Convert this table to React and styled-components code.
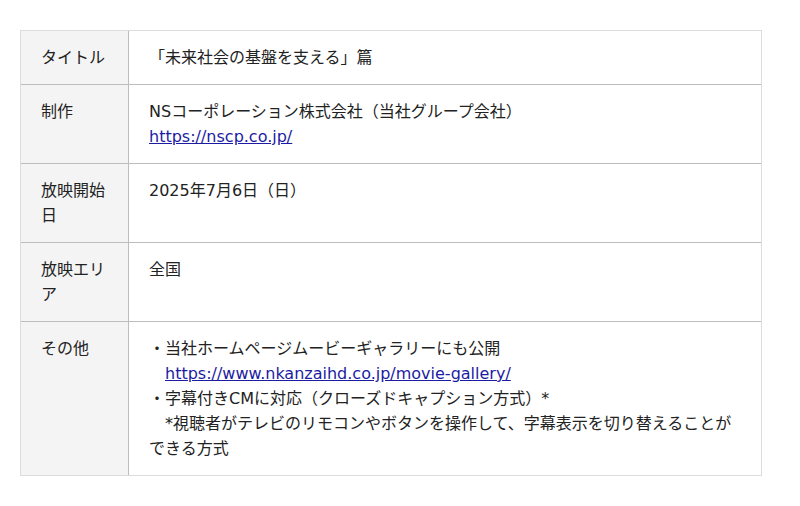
import React from 'react';
import styled, {createGlobalStyle} from 'styled-components';

const GlobalStyle = createGlobalStyle`
	body {
		margin: 0;
		background: #fff;
		font-family: 'DejaVu Sans', 'Noto Sans CJK JP', sans-serif;
		color: #222;
	}
`;

const Page = styled.div`
	padding: 30px 20px;
`;

const Table = styled.div`
	width: 742px;
	box-sizing: border-box;
	border: 1px solid #dcdcdc;
	font-size: 16px;
	line-height: 25px;
`;

const Row = styled.div`
	display: grid;
	grid-template-columns: 108px 1fr;
	border-bottom: ${(p) => (p.$last ? 'none' : '1px solid #bdbdbd')};
`;

const Head = styled.div`
	background: #f4f4f4;
	border-right: 1px solid #bdbdbd;
	padding: 14px 20px;
`;

const Cell = styled.div`
	padding: 14px 20px;
`;

const Line = styled.div``;

const Link = styled.a`
	color: #1c1ca3;
	text-decoration: underline;
`;

const IND = '\u3000';

const rows = [
	{
		head: 'タイトル',
		body: <Line>「未来社会の基盤を支える」篇</Line>,
	},
	{
		head: '制作',
		body: (
			<>
				<Line>NSコーポレーション株式会社（当社グループ会社）</Line>
				<Line>
					<Link href='https://nscp.co.jp/'>https://nscp.co.jp/</Link>
				</Line>
			</>
		),
	},
	{
		head: '放映開始日',
		body: <Line>2025年7月6日（日）</Line>,
	},
	{
		head: '放映エリア',
		body: <Line>全国</Line>,
	},
	{
		head: 'その他',
		body: (
			<>
				<Line>・当社ホームページムービーギャラリーにも公開</Line>
				<Line>
					{IND}
					<Link href='https://www.nkanzaihd.co.jp/movie-gallery/'>
						https://www.nkanzaihd.co.jp/movie-gallery/
					</Link>
				</Line>
				<Line>・字幕付きCMに対応（クローズドキャプション方式）*</Line>
				<Line>
					{IND + '*視聴者がテレビのリモコンやボタンを操作して、字幕表示を切り替えることができる方式'}
				</Line>
			</>
		),
	},
];

const App = () => {
	return (
		<Page>
			<GlobalStyle />
			<Table>
				{rows.map((r, i) => (
					<Row key={r.head} $last={i === rows.length - 1}>
						<Head>{r.head}</Head>
						<Cell>{r.body}</Cell>
					</Row>
				))}
			</Table>
		</Page>
	);
};

export default App;
